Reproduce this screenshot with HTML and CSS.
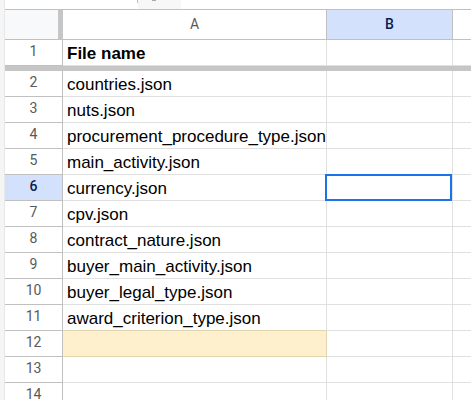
FILE: index.html
```html
<!DOCTYPE html>
<html lang="en">
<head>
<meta charset="utf-8">
<title>Spreadsheet</title>
<link rel="stylesheet" href="styles.css">
</head>
<body>
<div class="app">
  <div class="toolbar">
    <span class="divider"></span>
    <span class="tab"><svg width="8" height="2" viewBox="0 0 8 2" aria-hidden="true"><path d="M2 0H6V1H2Z" fill="#aaa"/></svg></span>
  </div>
  <table class="sheet">
    <colgroup><col class="col-num"><col class="col-a"><col class="col-b"><col></colgroup>
    <thead>
      <tr class="letters"><th class="corner"></th><th>A</th><th class="active">B</th><th></th></tr>
    </thead>
    <tbody>
      <tr><th>1</th><td class="title">File name</td><td></td><td></td></tr>
      <tr class="freeze-bar"><td colspan="4"></td></tr>
      <tr><th>2</th><td>countries.json</td><td></td><td></td></tr>
      <tr><th>3</th><td>nuts.json</td><td></td><td></td></tr>
      <tr><th>4</th><td>procurement_procedure_type.json</td><td></td><td></td></tr>
      <tr><th>5</th><td>main_activity.json</td><td></td><td></td></tr>
      <tr><th class="active">6</th><td>currency.json</td><td class="selected"></td><td></td></tr>
      <tr><th>7</th><td>cpv.json</td><td></td><td></td></tr>
      <tr><th>8</th><td>contract_nature.json</td><td></td><td></td></tr>
      <tr><th>9</th><td>buyer_main_activity.json</td><td></td><td></td></tr>
      <tr><th>10</th><td>buyer_legal_type.json</td><td></td><td></td></tr>
      <tr class="before-fill"><th>11</th><td>award_criterion_type.json</td><td></td><td></td></tr>
      <tr><th>12</th><td class="filled"></td><td></td><td></td></tr>
      <tr><th>13</th><td></td><td></td><td></td></tr>
      <tr><th>14</th><td></td><td></td><td></td></tr>
    </tbody>
  </table>
</div>
</body>
</html>
```
FILE: styles.css
```css
* {
  box-sizing: border-box;
}

body {
  margin: 0;
  background: #f5f5f5;
}

.app {
  height: 100vh;
  margin-left: 4px;
  border-left: 1px solid #e8e8e8;
  background: #fff;
  overflow: hidden;
}

.toolbar {
  display: flex;
  height: 10px;
  padding-left: 132px;
  border-bottom: 1px solid #c0c0c0;
}

.divider {
  width: 1px;
  height: 3px;
  background: #c0c0c0;
}

.tab {
  display: flex;
  justify-content: center;
  align-items: flex-start;
  width: 43px;
  padding-right: 12px;
  background: #f7f7f7;
}

.sheet {
  width: 100%;
  table-layout: fixed;
  border-collapse: separate;
  border-spacing: 0;
}

.col-num {
  width: 58px;
}

.col-a {
  width: 264px;
}

.col-b {
  width: 126px;
}

th,
td {
  height: 26px;
  padding: 0;
  border: 0 solid #e0e0e0;
  border-width: 0 1px 1px 0;
  white-space: nowrap;
}

td {
  padding: 2px 0 0 4px;
  font: 17px/23px "Liberation Sans", Arial, sans-serif;
  color: #000;
}

th {
  padding-bottom: 3px;
  border-color: #c0c0c0;
  font: 14px/20px Roboto, sans-serif;
  color: #575a5a;
}

tr > :last-child {
  border-right: 0;
}

.letters th {
  height: 30px;
  padding-bottom: 1px;
}

.letters .corner {
  border-right: 5px solid #c6c6c6;
  background: #f8f9fa;
}

.letters .active,
th.active {
  background: #d3e1fd;
  color: #0a1d4e;
  font-weight: 500;
}

.title {
  font-weight: bold;
}

.freeze-bar td {
  height: 5px;
  padding: 0;
  border: 0;
  background: #c6c6c6;
  line-height: 0;
}

.before-fill td:nth-child(2) {
  border-bottom-color: #e0d5b0;
}

.filled {
  border-color: #e0d5b0;
  background: #fff0cd;
}

.selected {
  position: relative;
}

.selected::after {
  content: "";
  position: absolute;
  inset: -1px 0 -1px -2px;
  border: 2px solid #1a73e8;
}
```
